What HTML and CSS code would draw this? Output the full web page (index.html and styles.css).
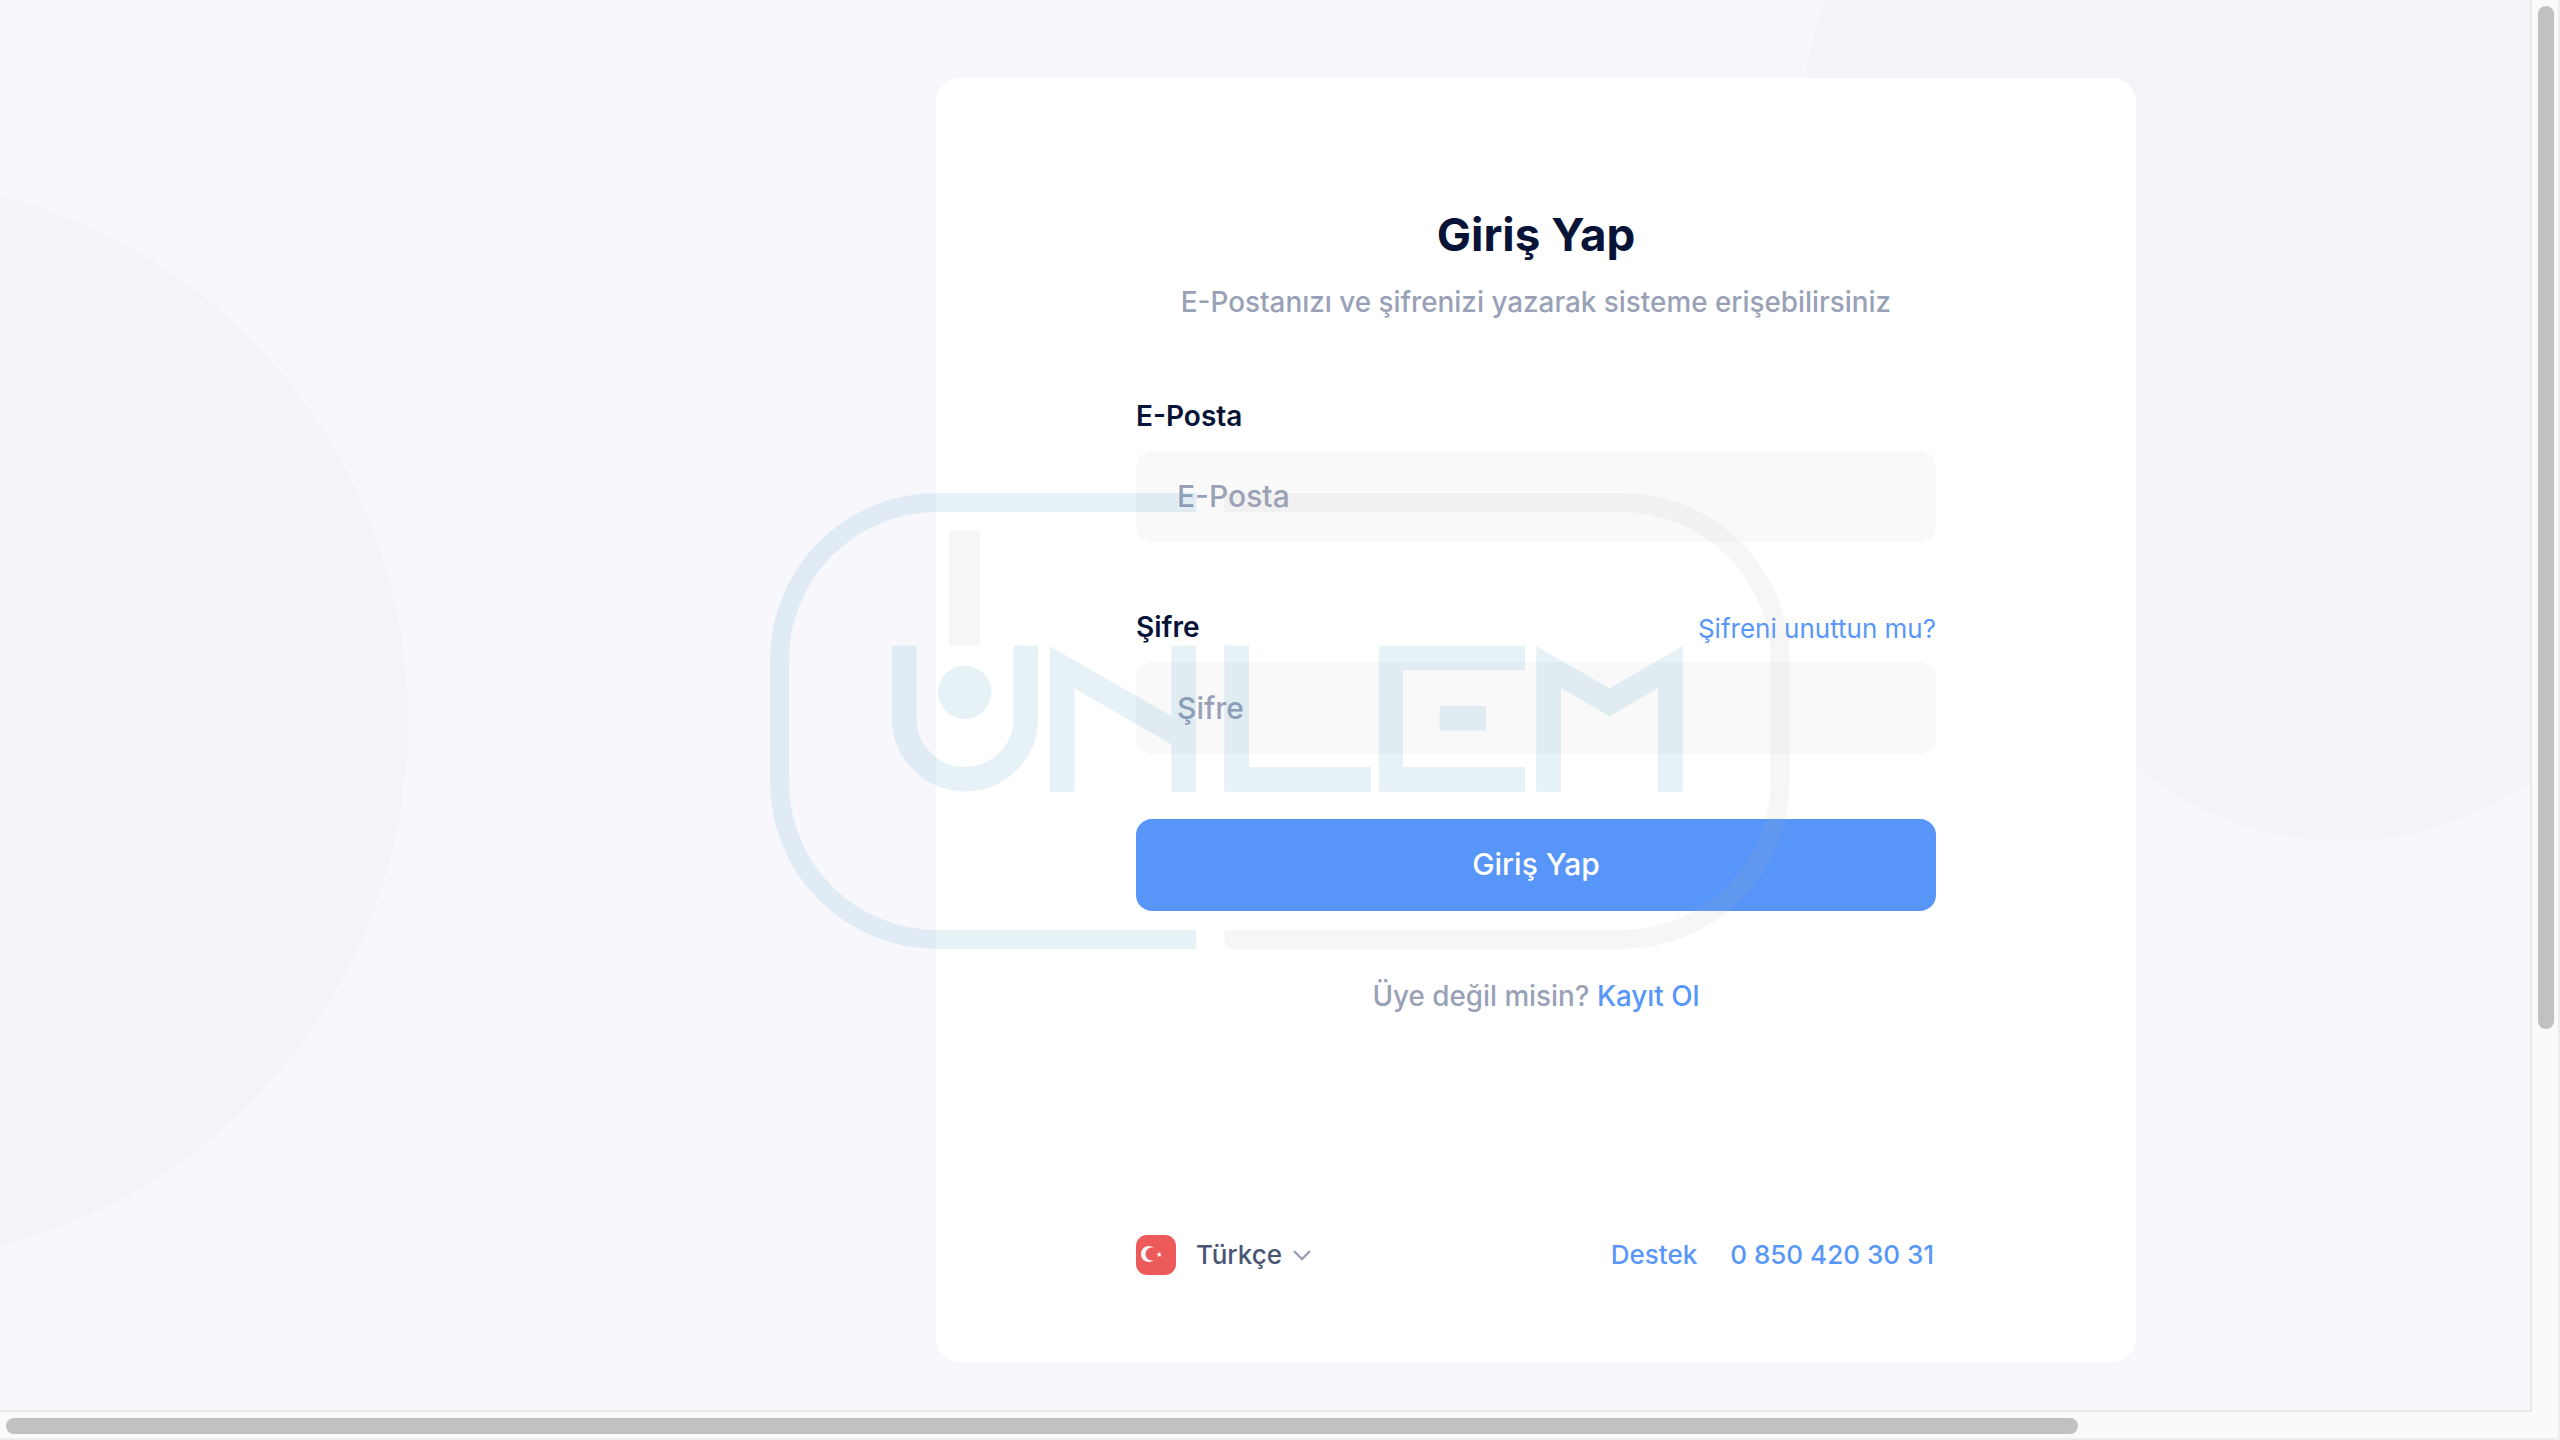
FILE: index.html
```html
<!DOCTYPE html>
<html lang="tr">
<head>
<meta charset="utf-8">
<title>Giriş Yap</title>
<link rel="stylesheet" href="styles.css">
</head>
<body>
<div class="frame">
  <div class="page">
    <svg class="backdrop" viewBox="0 0 2530 1410" aria-hidden="true">
      <circle cx="-134" cy="721" r="542"/>
      <path d="M1826 0C1800 70 1800 120 1806 200C1840 420 1980 640 2136 765C2200 820 2270 841 2345 841C2420 841 2480 815 2530 783V0Z"/>
    </svg>
    <main class="card">
      <form class="form">
        <header class="head">
          <h1 class="title">Giriş Yap</h1>
          <p class="subtitle">E-Postanızı ve şifrenizi yazarak sisteme erişebilirsiniz</p>
        </header>
        <div class="field">
          <label class="label" for="email">E-Posta</label>
          <input class="input" id="email" type="email" placeholder="E-Posta">
        </div>
        <div class="field">
          <div class="label-row">
            <label class="label" for="password">Şifre</label>
            <a class="forgot">Şifreni unuttun mu?</a>
          </div>
          <input class="input" id="password" type="password" placeholder="Şifre">
        </div>
        <button class="submit" type="button">Giriş Yap</button>
        <p class="signup">Üye değil misin? <a class="link">Kayıt Ol</a></p>
      </form>
      <footer class="foot">
        <div class="language">
          <svg class="flag" viewBox="0 0 40 40" aria-hidden="true">
            <rect width="40" height="40" rx="11" fill="#ed5a5c"/>
            <path d="M17.9 12.8A8 8 0 1 0 17.9 25.2A6.5 6.5 0 1 1 17.9 12.8Z" fill="#f5f5f5"/>
            <path d="M22.9 16.6L23.8 18.6L25.7 18.2L24.4 19.7L25.4 21.6L23.4 20.9L21.8 22.3L22 20.1L20.1 19L22.4 18.6Z" fill="#f5f5f5"/>
          </svg>
          <span class="language-name">Türkçe</span>
          <svg class="chevron" viewBox="0 0 20 12" aria-hidden="true"><path d="M2 2L10 10L18 2"/></svg>
        </div>
        <nav class="contact">
          <a class="link">Destek</a>
          <a class="link">0 850 420 30 31</a>
        </nav>
      </footer>
    </main>
    <svg class="watermark" viewBox="770 493 1020 456" role="img" aria-label="Ünlem">
      <g fill="none" stroke-width="19">
        <path class="blue-line" d="M1196.3 502.5H937A157.5 157.5 0 0 0 779.5 660V782A157.5 157.5 0 0 0 937 939.5H1196.3"/>
        <path class="gray-line" d="M1224.3 502.5H1622A158 158 0 0 1 1780 660.5V781.5A158 158 0 0 1 1622 939.5H1234"/>
        <path class="blue-line" stroke-width="24.5" d="M904.3 645.7V718.4A60.75 60.75 0 0 0 1025.8 718.4V645.7"/>
      </g>
      <g class="gray-fill">
        <path d="M1234 930H1224.3V940Q1225.5 949 1234 949Z"/>
        <rect x="949" y="531" width="31" height="114.7"/>
      </g>
      <g class="blue-fill">
        <circle cx="964.7" cy="692.3" r="26.7"/>
        <path d="M1050 646.5L1171.3 716V645.7H1196V791.7H1171.3V744.3L1074.3 688.3V791.7H1050Z"/>
        <path d="M1224.3 645.7H1249V767H1371V791.7H1224.3Z"/>
        <path d="M1378.8 645.7H1525V670H1403V767H1525V791.7H1378.8Z"/>
        <rect x="1439.6" y="706" width="46.4" height="24.7"/>
        <path d="M1536.3 646L1609.4 688.3L1682.8 646V791.7H1658V688L1609.4 716.3L1561 688V791.7H1536.3Z"/>
      </g>
    </svg>
  </div>
  <div class="scroll-y"><div class="thumb"></div></div>
  <div class="scroll-x"><div class="thumb"></div></div>
  <div class="corner"></div>
</div>
</body>
</html>
```
FILE: styles.css
```css
* { box-sizing: border-box; }

body {
  margin: 0;
  font-family: Inter, sans-serif;
  color: #071437;
}

h1, p { margin: 0; }

.frame {
  display: grid;
  grid-template-columns: 2530px 30px;
  grid-template-rows: 1410px 30px;
  width: 2560px;
  height: 1440px;
  overflow: hidden;
}

.page {
  position: relative;
  padding: 78px 394px 48px 936px;
  background: #f8f8fc;
  overflow: hidden;
}

.backdrop {
  position: absolute;
  inset: 0;
  width: 2530px;
  height: 1410px;
  fill: #f2f4f9;
}

.card {
  position: relative;
  display: flex;
  flex-direction: column;
  justify-content: space-between;
  height: 1284px;
  padding: 120px 200px 81px;
  background: #fff;
  border-radius: 24px;
}

.form {
  display: flex;
  flex-direction: column;
}

.head {
  display: flex;
  flex-direction: column;
  align-items: center;
  padding-bottom: 70.6px;
}

.title {
  padding-top: 9px;
  font-size: 45.7px;
  font-weight: 700;
  line-height: 56px;
}

.subtitle {
  padding-top: 19px;
  color: #99a1b7;
  font-size: 27.85px;
  font-weight: 500;
  line-height: 40px;
}

.field { padding-bottom: 65.1px; }
.field + .field { padding-bottom: 0; }

.label-row {
  display: flex;
  justify-content: space-between;
  height: 55px;
}

.label {
  display: block;
  height: 58px;
  font-size: 28px;
  font-weight: 600;
  line-height: 46px;
}

.label-row .label {
  height: 55px;
  line-height: 41px;
}

.forgot {
  color: #5897f8;
  font-size: 26px;
  line-height: 44px;
}

.input {
  display: block;
  width: 100%;
  height: 91.5px;
  padding: 0 41px;
  border: 0;
  border-radius: 16px;
  background: #f9f9f9;
  font: 500 30px Inter, sans-serif;
}

.input::placeholder { color: #99a1b7; opacity: 1; }

.submit {
  height: 91.5px;
  margin-top: 65.5px;
  padding: 0 0 2px;
  border: 0;
  border-radius: 16px;
  background: #5895f8;
  color: #fff;
  font: 500 30px Inter, sans-serif;
}

.signup {
  padding-top: 65px;
  color: #99a1b7;
  font-size: 27.8px;
  font-weight: 500;
  line-height: 40px;
  text-align: center;
}

.link { color: #5897f8; }

.foot {
  display: flex;
  align-items: center;
  justify-content: space-between;
  height: 52px;
  font-size: 26px;
  font-weight: 500;
}

.language { display: flex; align-items: center; color: #4b5675; }
.language-name { padding-bottom: 2px; }
.flag { width: 40px; height: 40px; margin-right: 20px; }
.chevron {
  width: 20px;
  height: 12px;
  margin-left: 10px;
  fill: none;
  stroke: #99a1b7;
  stroke-width: 2.4;
}

.contact {
  display: flex;
  gap: 33px;
  padding: 0 2px 2px 0;
}

.watermark {
  position: absolute;
  left: 770px;
  top: 493px;
  width: 1020px;
  height: 456px;
  opacity: .1;
  pointer-events: none;
}

.blue-line { stroke: #1d84bc; }
.gray-line { stroke: #b2b2b0; }
.blue-fill { fill: #1d84bc; }
.gray-fill { fill: #b2b2b0; }

.scroll-y {
  padding: 6px 4px 0 6px;
  background: #fafafa;
  border-left: 2px solid #e8e8e8;
  border-right: 2px solid #ededed;
}

.scroll-x {
  padding: 6px 0 0 6px;
  background: #fafafa;
  border-top: 2px solid #e8e8e8;
  border-bottom: 2px solid #ededed;
}

.corner {
  background: linear-gradient(#e8e8e8, #e8e8e8) no-repeat 0 0 / 2px 2px, #fafafa;
  border-right: 2px solid #ededed;
  border-bottom: 2px solid #ededed;
}

.thumb { background: #c1c1c1; border-radius: 8px; }
.scroll-y .thumb { width: 16px; height: 1023px; }
.scroll-x .thumb { width: 2072px; height: 16px; }
```
